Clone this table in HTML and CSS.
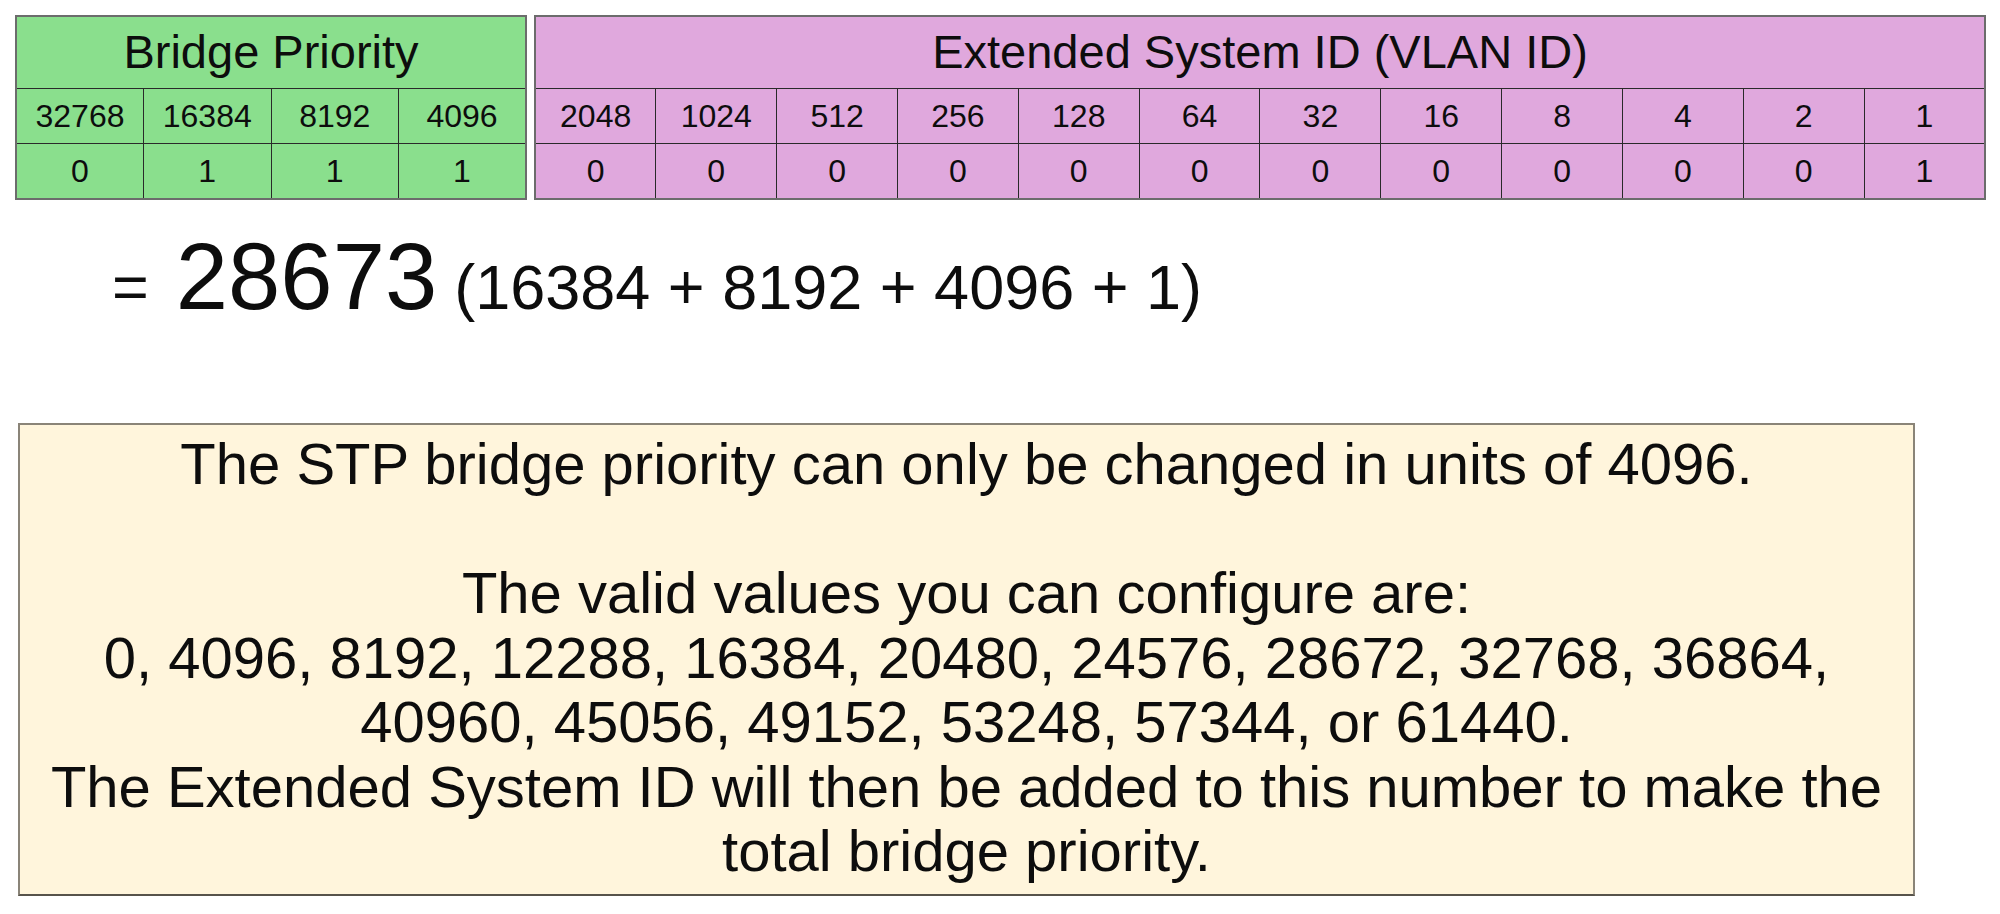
FILE: index.html
```html
<!DOCTYPE html>
<html lang="en">
<head>
<meta charset="utf-8">
<title>STP Bridge Priority</title>
<link rel="stylesheet" href="styles.css">
</head>
<body>
<div class="page">
  <div class="tables">
    <table class="tbl tbl-green">
      <tr><td class="head" colspan="4">Bridge Priority</td></tr>
      <tr class="row"><td>32768</td><td>16384</td><td>8192</td><td>4096</td></tr>
      <tr class="row"><td>0</td><td>1</td><td>1</td><td>1</td></tr>
    </table>
    <table class="tbl tbl-purple">
      <tr><td class="head" colspan="12">Extended System ID (VLAN ID)</td></tr>
      <tr class="row"><td>2048</td><td>1024</td><td>512</td><td>256</td><td>128</td><td>64</td><td>32</td><td>16</td><td>8</td><td>4</td><td>2</td><td>1</td></tr>
      <tr class="row"><td>0</td><td>0</td><td>0</td><td>0</td><td>0</td><td>0</td><td>0</td><td>0</td><td>0</td><td>0</td><td>0</td><td>1</td></tr>
    </table>
  </div>
  <div class="equation"><span class="eq-small eq-sign">=</span><span class="eq-big">28673</span><span class="eq-small eq-sum">(16384 + 8192 + 4096 + 1)</span></div>
  <div class="note">
    The STP bridge priority can only be changed in units of 4096.<br>
    <br>
    The valid values you can configure are:<br>
    0, 4096, 8192, 12288, 16384, 20480, 24576, 28672, 32768, 36864,<br>
    40960, 45056, 49152, 53248, 57344, or 61440.<br>
    The Extended System ID will then be added to this number to make the<br>
    total bridge priority.
  </div>
</div>
</body>
</html>
```
FILE: styles.css
```css
html, body {
  margin: 0;
  padding: 0;
  background: #ffffff;
}
body {
  font-family: "Liberation Sans", Arial, sans-serif;
  color: #0d0d0d;
}
.page {
  width: 2000px;
  height: 914px;
  overflow: hidden;
}
.tables {
  display: flex;
  gap: 7px;
  padding: 15px 0 0 15px;
}
.tbl {
  border-collapse: collapse;
  table-layout: fixed;
  border: 2px solid #6c6c6c;
}
.tbl-green {
  width: 512px;
  background: #8adf8d;
}
.tbl-purple {
  width: 1452px;
  background: #e0a8dd;
}
.tbl td {
  border: 1px solid #2a2a2a;
  text-align: center;
  padding: 0;
  vertical-align: middle;
}
.tbl .head {
  height: 69px;
  font-size: 47px;
  line-height: 47px;
  padding-bottom: 2px;
  border-top: 2px solid #6c6c6c;
}
.tbl .row td {
  height: 54px;
  font-size: 32px;
  line-height: 32px;
}
.equation {
  display: flex;
  align-items: baseline;
  margin: 30px 0 0 112px;
  height: 94px;
  line-height: 1;
  white-space: nowrap;
}
.eq-big {
  font-size: 94px;
}
.eq-small {
  font-size: 63px;
}
.eq-sign {
  margin-right: 27px;
}
.eq-sum {
  margin-left: 17px;
}
.note {
  margin: 99px 0 0 18px;
  width: 1897px;
  height: 473px;
  box-sizing: border-box;
  border: 2px solid #8a8478;
  border-bottom-color: #57534b;
  background: #fff5dc;
  text-align: center;
  font-size: 58px;
  line-height: 64.5px;
  padding-top: 7px;
  white-space: nowrap;
}
```
